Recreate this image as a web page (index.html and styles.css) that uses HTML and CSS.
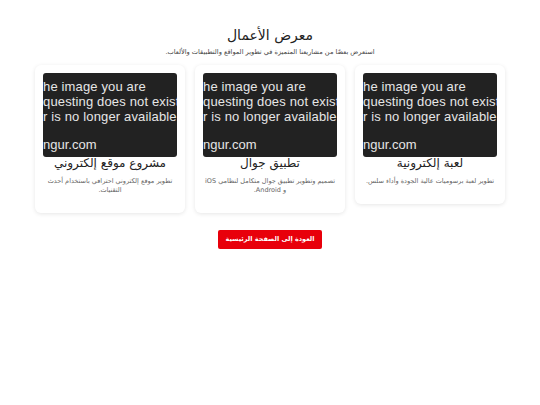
FILE: index.html
```html
<!DOCTYPE html>
<html lang="ar" dir="rtl">
<head>
<meta charset="utf-8">
<title>معرض الأعمال</title>
<link rel="stylesheet" href="styles.css">
</head>
<body>
<main class="page">
  <h1 class="title">معرض الأعمال</h1>
  <p class="subtitle">استعرض بعضًا من مشاريعنا المتميزة في تطوير المواقع والتطبيقات والألعاب.</p>
  <section class="cards">
    <article class="card">
      <div class="thumb">
        <span class="l1">he image you are</span>
        <span class="l2">questing does not exist</span>
        <span class="l3">r is no longer available.</span>
        <span class="l4">ngur.com</span>
      </div>
      <h2 class="card-title">لعبة إلكترونية</h2>
      <p class="card-desc">تطوير لعبة برسوميات عالية الجودة وأداء سلس.</p>
    </article>
    <article class="card">
      <div class="thumb">
        <span class="l1">he image you are</span>
        <span class="l2">questing does not exist</span>
        <span class="l3">r is no longer available.</span>
        <span class="l4">ngur.com</span>
      </div>
      <h2 class="card-title">تطبيق جوال</h2>
      <p class="card-desc">تصميم وتطوير تطبيق جوال متكامل لنظامي iOS و Android.</p>
    </article>
    <article class="card">
      <div class="thumb">
        <span class="l1">he image you are</span>
        <span class="l2">questing does not exist</span>
        <span class="l3">r is no longer available.</span>
        <span class="l4">ngur.com</span>
      </div>
      <h2 class="card-title">مشروع موقع إلكتروني</h2>
      <p class="card-desc">تطوير موقع إلكتروني احترافي باستخدام أحدث التقنيات.</p>
    </article>
  </section>
  <div class="actions">
    <a class="btn" href="#">العودة إلى الصفحة الرئيسية</a>
  </div>
</main>
</body>
</html>
```

FILE: styles.css
```css
html, body {
  margin: 0;
  padding: 0;
  background: #ffffff;
}
body {
  font-family: "DejaVu Sans", "Noto Sans", sans-serif;
  direction: rtl;
  color: #222;
}
.page {
  padding: 26px 35px 0;
}
.title {
  margin: 0;
  font-size: 14px;
  font-weight: 400;
  line-height: 18px;
  text-align: center;
  color: #222;
}
.subtitle {
  margin: 4px 0 0;
  font-size: 6.6px;
  line-height: 9px;
  text-align: center;
  color: #444;
}
.cards {
  margin-top: 8px;
  display: flex;
  gap: 10px;
  align-items: flex-start;
}
.card {
  width: 150px;
  box-sizing: border-box;
  padding: 8px 8px 18px;
  background: #fff;
  border-radius: 6px;
  box-shadow: 0 1px 4px rgba(0, 0, 0, 0.1);
  text-align: center;
}
.thumb {
  height: 84px;
  background: #222222;
  border-radius: 3px;
  overflow: hidden;
  direction: ltr;
  text-align: left;
  display: flex;
  flex-direction: column;
  padding-top: 6px;
  box-sizing: border-box;
}
.thumb span {
  display: block;
  white-space: nowrap;
  font-family: "Liberation Sans", Arial, sans-serif;
  font-size: 13px;
  line-height: 15px;
  color: #e6e6e6;
  letter-spacing: 0.15px;
}
.thumb .l4 {
  margin-top: 13px;
  letter-spacing: 0;
}
.card-title {
  margin: 0;
  font-size: 12px;
  font-weight: 400;
  line-height: 13px;
  color: #222;
}
.card-desc {
  margin: 7px 0 0;
  font-size: 6.5px;
  line-height: 9px;
  color: #666;
}
.actions {
  margin-top: 17px;
  display: flex;
  justify-content: center;
}
.btn {
  display: inline-block;
  width: 104px;
  height: 19px;
  line-height: 19px;
  background: #e8000b;
  color: #fff;
  font-size: 6.5px;
  font-weight: 700;
  text-align: center;
  text-decoration: none;
  border-radius: 2px;
}
```
